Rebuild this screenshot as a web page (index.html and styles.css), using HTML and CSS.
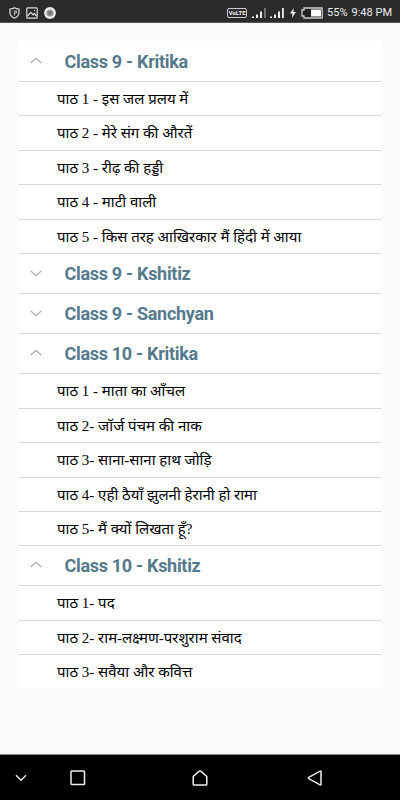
FILE: index.html
```html
<!DOCTYPE html>
<html lang="hi">
<head>
    <meta charset="UTF-8">
    <meta name="viewport" content="width=device-width, initial-scale=1.0">
    <title>Chapters</title>
    <link rel="stylesheet" href="styles.css">
</head>
<body>
    <header class="status-bar">
        <div class="notifications">
            <svg width="11" height="12" viewBox="0 0 11 12" fill="none" stroke="#ddd" stroke-width="1.2"><path d="M5.5 .8Q3.5 2 1 2V6Q1.3 9.5 5.5 11.2Q9.7 9.5 10 6V2Q7.500 2 5.500 .8Z"/><path d="M5.500 3.500V8.500M5.500 4H7.500V6H5.500" stroke="#aaa"/></svg>
            <svg width="12" height="12" viewBox="0 0 12 12" fill="none" stroke="#ddd" stroke-width="1.2"><rect x=".8" y=".8" width="10.400" height="10.400" rx="1"/><path d="M1.500 9L4.800 5.300L7 7.800L8.200 6.500L10.500 9M8 3.500H9"/></svg>
            <svg width="12" height="12" viewBox="0 0 12 12"><circle cx="6" cy="6" r="5.900" fill="#eee"/><circle cx="6" cy="6" r="3.600" fill="#999"/><circle cx="6" cy="6" r="2" fill="#777"/></svg>
        </div>
        <div class="system">
            <span class="volte">VoLTE</span>
            <svg class="signal" width="14" height="12" viewBox="0 0 14 12" fill="#eee"><path d="M0 9.500H2V11H0ZM4 7.500H6V11H4ZM8 4.500H10V11H8Z"/><path d="M12 1H13.800V11H12Z" fill="#777"/></svg>
            <svg class="signal-two" width="14" height="12" viewBox="0 0 14 12" fill="#eee"><path d="M0 9.500H2V11H0ZM4 7.500H6V11H4ZM8 4.500H10V11H8ZM12 1H13.800V11H12Z"/></svg>
            <svg class="bolt" width="6" height="10" viewBox="0 0 6 10" fill="#eee"><path d="M3.800 0L0 5.500H2.500L1.800 10L6 4H3.400Z"/></svg>
            <svg class="battery" width="22" height="12" viewBox="0 0 22 12"><path d="M3 1H21.200V11H3V9H1V3H3Z" fill="#222" stroke="#ccc" stroke-width="1.300"/><path d="M10 2.500H20V9.500H10Z" fill="#fff"/></svg>
            <span class="percent">55%</span>
            <span class="time">9:48 PM</span>
        </div>
    </header>

    <main class="content">
        <div class="class-list">
            <section class="open">
                <h2><svg class="arrow" viewBox="0 0 12 7"><path d="M.8 6L6 1.200L11.200 6"/></svg>Class 9 - Kritika</h2>
                <ul>
                    <li>पाठ 1 - इस जल प्रलय में</li>
                    <li>पाठ 2 - मेरे संग की औरतें</li>
                    <li>पाठ 3 - रीढ़ की हड्डी</li>
                    <li>पाठ 4 - माटी वाली</li>
                    <li>पाठ 5 - किस तरह आखिरकार मैं हिंदी में आया</li>
                </ul>
            </section>
            <section>
                <h2><svg class="arrow down" viewBox="0 0 12 7"><path d="M.8 1L6 5.800L11.200 1"/></svg>Class 9 - Kshitiz</h2>
            </section>
            <section>
                <h2><svg class="arrow down" viewBox="0 0 12 7"><path d="M.8 1L6 5.800L11.200 1"/></svg>Class 9 - Sanchyan</h2>
            </section>
            <section class="open">
                <h2><svg class="arrow" viewBox="0 0 12 7"><path d="M.8 6L6 1.200L11.200 6"/></svg>Class 10 - Kritika</h2>
                <ul>
                    <li>पाठ 1 - माता का आँचल</li>
                    <li>पाठ 2- जॉर्ज पंचम की नाक</li>
                    <li>पाठ 3- साना-साना हाथ जोड़ि</li>
                    <li>पाठ 4- एही ठैयाँ झुलनी हेरानी हो रामा</li>
                    <li>पाठ 5- मैं क्यों लिखता हूँ?</li>
                </ul>
            </section>
            <section class="open">
                <h2><svg class="arrow" viewBox="0 0 12 7"><path d="M.8 6L6 1.200L11.200 6"/></svg>Class 10 - Kshitiz</h2>
                <ul>
                    <li>पाठ 1- पद</li>
                    <li>पाठ 2- राम-लक्ष्मण-परशुराम संवाद</li>
                    <li>पाठ 3- सवैया और कवित्त</li>
                </ul>
            </section>
        </div>
    </main>

    <nav class="nav-bar">
        <svg class="hide" width="12" height="8" viewBox="0 0 12 8"><path d="M1 1.200L6 6.200L11 1.200"/></svg>
        <svg class="recent" width="16" height="16" viewBox="0 0 16 16"><rect x="1" y="1" width="13.500" height="13.500" rx=".8"/></svg>
        <svg class="home" width="16" height="16" viewBox="0 0 16 16"><path d="M1.200 6.500L7.200 1.200Q8 .7 8.800 1.200L14.800 6.500V14.200Q14.800 15 14 15H2Q1.200 15 1.200 14.200Z"/></svg>
        <svg class="back" width="16" height="16" viewBox="0 0 16 16"><path d="M14 1.200V14.800H13L1.800 8.600Q1 8 1.800 7.400L13 1.200Z"/></svg>
    </nav>
</body>
</html>
```
FILE: styles.css
```css
:root {
    --bar-dark: #2b2b2b;
    --page: #fafafa;
    --title: #557a8d;
    --line: #d7d7d7;
}

* {
    box-sizing: border-box;
}

body {
    margin: 0;
    height: 800px;
    display: flex;
    flex-direction: column;
    overflow: hidden;
    background-color: var(--page);
    font-family: Roboto, sans-serif;
}

svg {
    display: block;
    flex: none;
}

.status-bar {
    height: 23px;
    display: flex;
    justify-content: space-between;
    padding: 3px 8px 0 9px;
    background-color: var(--bar-dark);
    border-bottom: 1px solid #555;
    color: #eee;
}

.notifications, .system {
    display: flex;
    align-items: center;
}
.notifications {
    gap: 6px;
}
.volte {
    width: 20px;
    height: 10px;
    margin-right: 5px;
    border-radius: 2px;
    border: 1px solid #ccc;
    font-size: 6px;
    font-weight: bold;
    line-height: 8px;
    text-align: center;
}
.signal {
    margin-right: 4px;
}
.signal-two {
    margin-right: 6px;
}
.bolt {
    margin-right: 5px;
}
.battery {
    margin-right: 4px;
}
.percent, .time {
    font-size: 11px;
    line-height: 18px;
}
.percent {
    margin-right: 4px;
}

.content {
    flex: 1;
    padding: 18px 19px 0;
}

.class-list {
    padding-top: 1px;
    background-color: #fff;
}
.class-list h2 {
    display: flex;
    align-items: center;
    height: 40px;
    margin: 0;
    padding-left: 11px;
    border-bottom: 1px solid var(--line);
    color: var(--title);
    font-size: 18px;
    font-weight: bold;
    letter-spacing: -0.3px;
    line-height: 40px;
}
.arrow {
    width: 12px;
    height: 7px;
    margin-right: 22.5px;
    margin-bottom: 2px;
    fill: none;
    stroke: #aaa;
    stroke-width: 1.2;
}
.arrow.down {
    margin-bottom: 0;
}
.class-list ul {
    margin: 0;
    padding: 0;
    list-style: none;
}
.class-list li {
    height: 34.45px;
    padding-left: 38px;
    border-bottom: 1px solid var(--line);
    color: #000;
    font-family: "Liberation Serif", "Noto Sans", serif;
    font-size: 15px;
    line-height: 35px;
    white-space: nowrap;
}
.class-list section:last-child li:last-child {
    height: 33px;
    border-bottom: none;
}

.nav-bar {
    height: 46px;
    display: flex;
    align-items: center;
    padding-left: 15px;
    border-top: 1px solid #888;
    background-color: #000;
}
.nav-bar svg {
    fill: none;
    stroke: #eee;
    stroke-width: 1.5;
}
.hide {
    margin-right: 43px;
}
.recent {
    margin-right: 106px;
}
.home {
    margin-right: 99px;
}
```
